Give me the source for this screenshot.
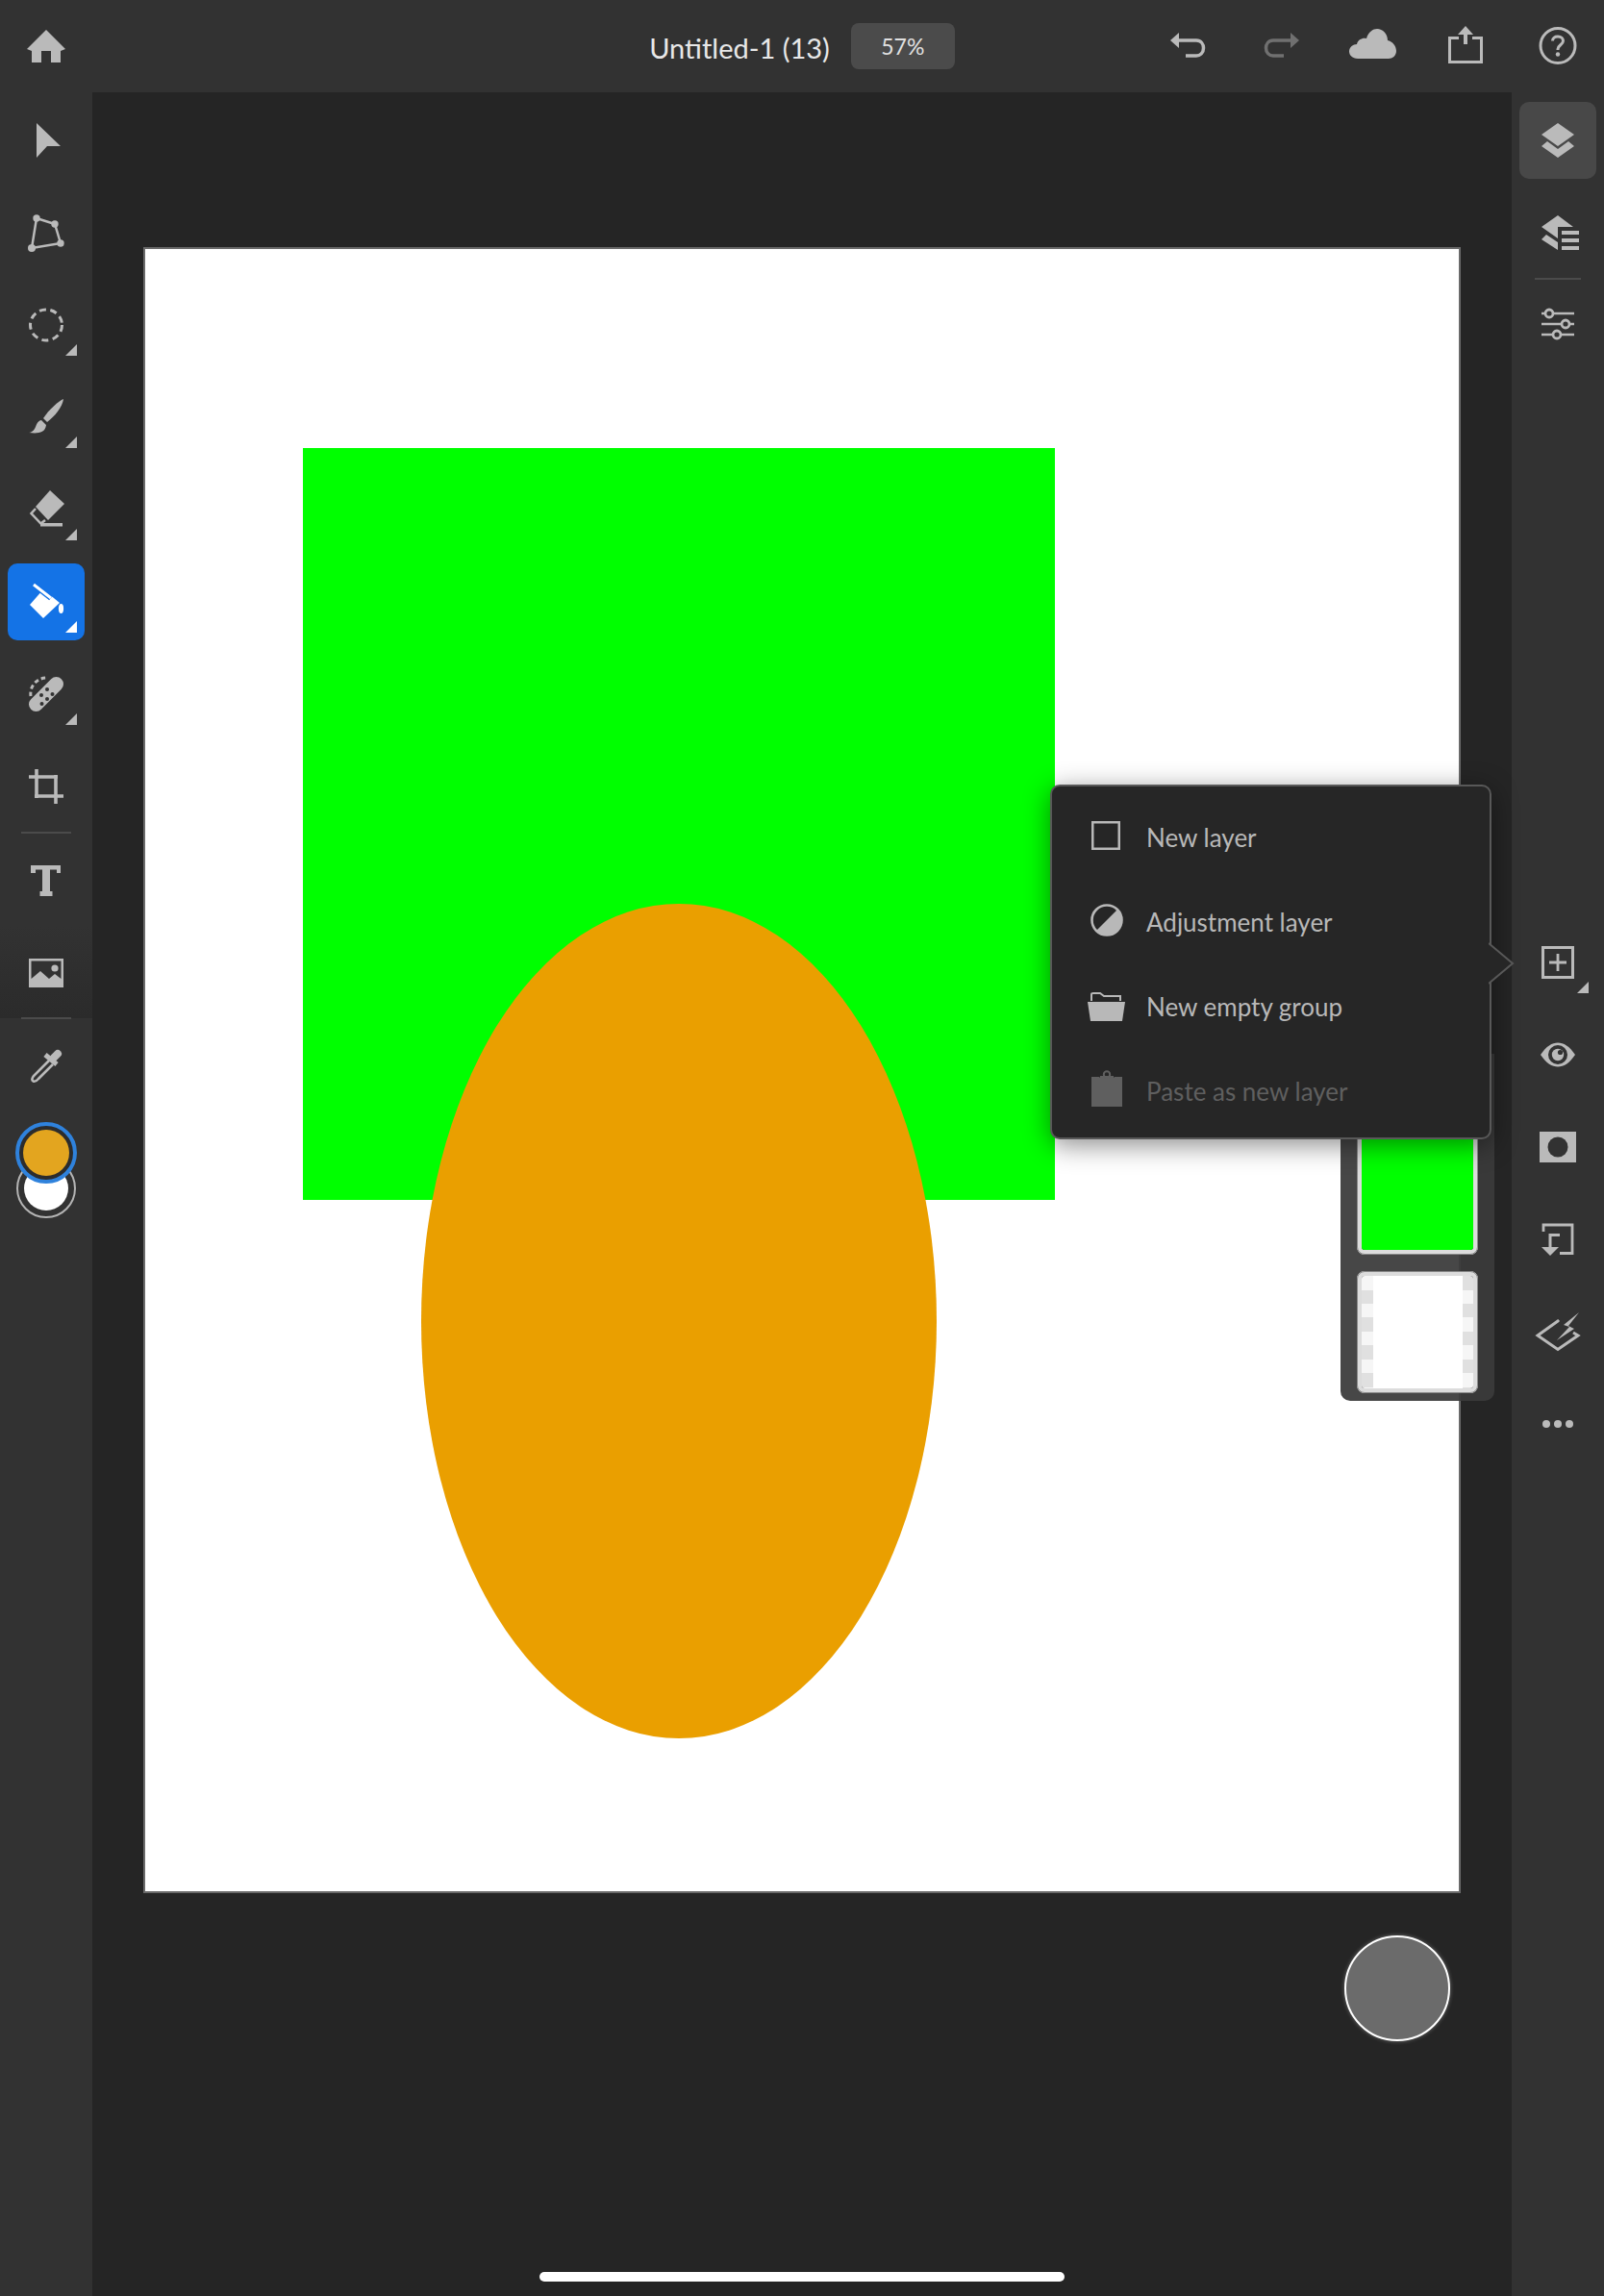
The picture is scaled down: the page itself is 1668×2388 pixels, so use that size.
<div class="app">
  <header class="topbar">
    <div class="side">
      <div class="tool">
        <svg class="ic" viewBox="0 0 48 48"><path fill="currentColor" d="M24 7 44 27 39 29V41H29V29H19V41H9V29L4 27Z"/></svg>
      </div>
    </div>
    <div class="doc">
      <span class="title">Untitled-1 (13)</span>
      <span class="zoom">57%</span>
    </div>
    <div class="side right">
      <div class="tool">
        <svg class="ic" viewBox="0 0 48 48"><path fill="currentColor" d="M5 18 14 10V26Z"/><path fill="none" stroke="currentColor" stroke-width="3.5" d="M14 18H32C37 18 39.5 22 39.5 26 39.5 31 36 34 32 34H21"/></svg>
      </div>
      <div class="tool dim">
        <svg class="ic" viewBox="0 0 48 48"><path fill="currentColor" d="M43 18 34 10V26Z"/><path fill="none" stroke="currentColor" stroke-width="3.5" d="M34 18H16C11 18 8.5 22 8.5 26 8.5 31 12 34 16 34H27"/></svg>
      </div>
      <div class="tool">
        <svg class="ic wide" viewBox="0 0 56 48"><path fill="currentColor" d="M12 37C6 37 3 33 3 29.5 3 25 7 22 11 22 12 17 17 15 21 16 23 9 28 6 32 6 38 6 43 11 43 18 48 19 52 24 52 29 52 34 48 37 44 37Z"/></svg>
      </div>
      <div class="tool">
        <svg class="ic" viewBox="0 0 48 48"><path fill="none" stroke="currentColor" stroke-width="3" d="M17 15.5H7.5V40.5H40.5V15.5H31"/><path fill="currentColor" d="M24 3 32 12H26V22H22V12H16Z"/></svg>
      </div>
      <div class="tool">
        <svg class="ic" viewBox="0 0 48 48"><circle cx="24" cy="23.5" r="18" fill="none" stroke="currentColor" stroke-width="3"/><path fill="none" stroke="currentColor" stroke-width="3" d="M18.5 18.5C18.5 15.5 21 14 24 14 27.5 14 29.5 16 29.5 18.5 29.5 22.5 24 23 24 27V28"/><circle cx="24" cy="32.5" r="2.2" fill="currentColor"/></svg>
      </div>
    </div>
  </header>

  <div class="body">
    <nav class="rail left">
      <div class="tools">
        <div class="tool">
          <svg class="ic" viewBox="0 0 48 48"><path fill="currentColor" d="M14 6 39 30H25L14 42Z"/></svg>
        </div>
        <div class="tool">
          <svg class="ic" viewBox="0 0 48 48"><path fill="none" stroke="currentColor" stroke-width="2.5" d="M14 9 33 15 39 35 9 40Z"/><g fill="currentColor"><circle cx="14" cy="9" r="3.7"/><circle cx="33" cy="15" r="3.7"/><circle cx="39" cy="35" r="3.7"/><circle cx="9" cy="40" r="4"/></g></svg>
        </div>
        <div class="tool">
          <svg class="ic" viewBox="0 0 48 48"><ellipse cx="24" cy="24" rx="16.5" ry="16" fill="none" stroke="currentColor" stroke-width="3" stroke-dasharray="7 4.5"/></svg>
          <i class="corner"></i>
        </div>
        <div class="tool">
          <svg class="ic" viewBox="0 0 48 48"><path fill="currentColor" d="M42 5C37 7 27 16 21 25L25 29C33 23 41 13 42 5Z"/><path fill="currentColor" d="M19 27C14 28 14 33 12 36 11 38 8 40 6 40 14 41 23 41 24 32Z"/></svg>
          <i class="corner"></i>
        </div>
        <div class="tool">
          <svg class="ic" viewBox="0 0 48 48"><path fill="currentColor" d="M28 4 43 18 26 35 13 21Z"/><path fill="none" stroke="currentColor" stroke-width="2.5" d="M13 23 8.5 28 18.5 38.5 23 35"/><path fill="currentColor" d="M18 38H41V41.5H18Z"/></svg>
          <i class="corner"></i>
        </div>
        <div class="tool active">
          <div class="chip">
            <svg class="ic" viewBox="0 0 48 48"><path fill="currentColor" d="M7 27 21 11 38 25 21 41Z"/><path fill="none" stroke="#1473e6" stroke-width="6" d="M11 6 29 20"/><path fill="none" stroke="currentColor" stroke-width="3" d="M11 6 29 20"/><ellipse cx="39.5" cy="31" rx="2.6" ry="5" fill="currentColor"/></svg>
            <i class="corner"></i>
          </div>
        </div>
        <div class="tool">
          <svg class="ic" viewBox="0 0 48 48"><path fill="none" stroke="currentColor" stroke-width="3" stroke-dasharray="4.5 3" d="M8 26A16.5 16.5 0 0 1 24 7"/><path fill="none" stroke="currentColor" stroke-width="15" stroke-linecap="round" d="M13.5 34.5 34.5 13.5"/><g fill="#323232"><circle cx="25" cy="19" r="2"/><circle cx="30.5" cy="24" r="2"/><circle cx="19" cy="25" r="2"/><circle cx="25" cy="29" r="2"/><circle cx="19.5" cy="34" r="2"/></g></svg>
          <i class="corner"></i>
        </div>
        <div class="tool">
          <svg class="ic" viewBox="0 0 48 48"><path fill="none" stroke="currentColor" stroke-width="3.6" d="M6 14H36M34 12V42M14 6V36M12 34H42"/></svg>
        </div>
        <div class="sep"></div>
        <div class="tool">
          <svg class="ic" viewBox="0 0 48 48"><path fill="currentColor" d="M8 9H39V17H35V13.5H28V36H30.5V41H17.5V36H20V13.5H13V17H8Z"/></svg>
        </div>
        <div class="tool">
          <svg class="ic" viewBox="0 0 48 48"><path fill="currentColor" d="M6 10H42V40H6Z"/><path fill="#323232" d="M8.5 12.5H39.5V31L33 26 27 31 18 23 8.5 31Z"/><circle cx="33" cy="20" r="3.6" fill="currentColor"/></svg>
        </div>
      </div>
      <div class="sep"></div>
      <div class="tool">
        <svg class="ic" viewBox="0 0 48 48"><path fill="none" stroke="currentColor" stroke-width="2.6" d="M27 19 11 35Q8 39 10.5 40.5 13 41.5 16 38L31 23"/><path fill="none" stroke="currentColor" stroke-width="5" d="M23 13 35 23"/><path fill="none" stroke="currentColor" stroke-width="8" stroke-linecap="round" d="M36 12 32 16"/></svg>
      </div>
      <div class="swatches">
        <div class="fg"><span></span></div>
        <div class="bg"><span></span></div>
      </div>
    </nav>

    <main class="canvas">
      <div class="art">
        <div class="rect"></div>
        <div class="oval"></div>
      </div>

      <aside class="layers">
        <div class="thumb green"><span></span></div>
        <div class="thumb blank">
          <b class="strip"></b>
          <span></span>
          <b class="strip alt"></b>
        </div>
      </aside>

      <div class="menu">
        <div class="row">
          <svg class="ic" viewBox="0 0 48 48"><rect x="9.25" y="8.25" width="27.5" height="27.5" fill="none" stroke="currentColor" stroke-width="2.5"/></svg>
          <span>New layer</span>
        </div>
        <div class="row">
          <svg class="ic" viewBox="0 0 48 48"><circle cx="24" cy="22" r="15.5" fill="none" stroke="currentColor" stroke-width="2.6"/><path fill="currentColor" d="M35 11A15.5 15.5 0 0 1 13 33Z"/></svg>
          <span>Adjustment layer</span>
        </div>
        <div class="row">
          <svg class="ic" viewBox="0 0 48 48"><path fill="none" stroke="currentColor" stroke-width="2" d="M8 18V11Q8 10 10 10H17L21 13H38V18"/><path fill="currentColor" d="M4 19H43L40 39H7Z"/></svg>
          <span>New empty group</span>
        </div>
        <div class="row off">
          <svg class="ic" viewBox="0 0 48 48"><path fill="currentColor" d="M8 9H40V40H8Z"/><path fill="#262626" d="M16 5H32V9.5H16Z"/><path fill="currentColor" d="M17 8H31V13H17Z"/><circle cx="24" cy="6.5" r="3.2" fill="none" stroke="currentColor" stroke-width="2"/></svg>
          <span>Paste as new layer</span>
        </div>
        <svg class="beak" viewBox="0 0 28 46"><path fill="#262626" stroke="#585858" stroke-width="2" d="M0 2 25 23 0 44"/></svg>
      </div>

      <div class="fab"></div>
      <div class="home"></div>
    </main>

    <nav class="rail right">
      <div class="tool">
        <div class="chip gray">
          <svg class="ic" viewBox="0 0 48 48"><path fill="currentColor" d="M24 6 41 18 24 30 7 18Z"/><path fill="currentColor" d="M7 30 13 25 24 33 35 25 41 30 24 42Z"/></svg>
        </div>
      </div>
      <div class="tool">
        <svg class="ic" viewBox="0 0 48 48"><path fill="currentColor" d="M24 6 40 18H24V30L7 18Z"/><path fill="currentColor" d="M7 31 12 26 24 34V42Z"/><path fill="currentColor" d="M28 22H46V26H28ZM28 30H46V34H28ZM28 38H46V42H28Z"/></svg>
      </div>
      <div class="sep"></div>
      <div class="tool">
        <svg class="ic" viewBox="0 0 48 48"><path fill="none" stroke="currentColor" stroke-width="2.6" d="M7 12H41M7 23H41M7 34H41"/><g fill="#323232" stroke="currentColor" stroke-width="2.8"><circle cx="15" cy="12" r="4"/><circle cx="32" cy="23" r="4"/><circle cx="23" cy="34" r="4"/></g></svg>
      </div>

      <div class="lower">
        <div class="tool">
          <svg class="ic" viewBox="0 0 48 48"><rect x="8.5" y="8.5" width="31" height="31" fill="none" stroke="currentColor" stroke-width="3"/><path fill="none" stroke="currentColor" stroke-width="2.8" d="M15 24H33M24 15V33"/></svg>
          <i class="corner"></i>
        </div>
        <div class="tool">
          <svg class="ic" viewBox="0 0 48 48"><path fill="currentColor" d="M6 24C12 15 18 11.5 24 11.5 30 11.5 36 15 42 24 36 33 30 36.5 24 36.5 18 36.5 12 33 6 24Z"/><circle cx="24" cy="24" r="10" fill="#323232"/><circle cx="24" cy="24" r="6.2" fill="currentColor"/><circle cx="26.5" cy="21.5" r="2.6" fill="#323232"/></svg>
        </div>
        <div class="tool">
          <svg class="ic" viewBox="0 0 48 48"><path fill="currentColor" d="M5 8H43V40H5Z"/><circle cx="24" cy="24" r="10.5" fill="#323232"/></svg>
        </div>
        <div class="tool">
          <svg class="ic" viewBox="0 0 48 48"><path fill="none" stroke="currentColor" stroke-width="2.8" d="M9 16V9H39V38.5H26"/><path fill="none" stroke="currentColor" stroke-width="3" d="M26 19.5H16V33"/><path fill="currentColor" d="M7 32H25L16 41Z"/></svg>
        </div>
        <div class="tool">
          <svg class="ic" viewBox="0 0 48 48"><path fill="none" stroke="currentColor" stroke-width="3" d="M25 14 24 13 3 28 24 42.5 45 28 40 25"/><path fill="currentColor" d="M46 4 30 17 36 19 23 33 41 21 35 18Z"/></svg>
        </div>
        <div class="tool">
          <svg class="ic" viewBox="0 0 48 48"><g fill="currentColor"><circle cx="12" cy="24" r="4"/><circle cx="24" cy="24" r="4"/><circle cx="36" cy="24" r="4"/></g></svg>
        </div>
      </div>
    </nav>
  </div>
</div>

<style>
:global(body){margin:0;background:#252525}
.app{width:1668px;height:2388px;display:flex;flex-direction:column;overflow:hidden;font-family:Lato,"Open Sans",sans-serif;color:#bababa}
.topbar{height:96px;flex:none;background:#323232;display:grid;grid-template-columns:1fr auto 1fr;align-items:center}
.side{display:flex}
.side.right{justify-content:flex-end}
.doc{display:flex;align-items:center;gap:22px}
.title{font-size:29px;color:#e8e8e8;padding-top:2px}
.zoom{width:108px;height:48px;background:#4b4b4b;border-radius:8px;display:flex;align-items:center;justify-content:center;font-size:23px;color:#e0e0e0}
.tool{position:relative;width:96px;height:96px;flex:none;display:flex;align-items:center;justify-content:center}
.dim{color:#707070}
.ic{width:48px;height:48px;display:block;flex:none}
.ic.wide{width:56px}
.body{flex:1;display:flex;min-height:0}
.rail{width:96px;flex:none;background:#323232;display:flex;flex-direction:column;padding-top:2px}
.tools{background:linear-gradient(#323232 90%,#2b2b2b)}
.sep{height:2px;margin:-1px 22px 0;background:#4b4b4b;position:relative}
.rail.right .sep{margin:-1px 24px}
.lower{margin-top:567px}
.corner{position:absolute;right:16px;bottom:16px;width:12px;height:12px;background:currentColor;clip-path:polygon(100% 0,100% 100%,0 100%)}
.chip{position:relative;width:80px;height:80px;border-radius:10px;display:flex;align-items:center;justify-content:center}
.active{color:#fff}
.active .chip{background:#1473e6}
.active .corner{right:8px;bottom:8px}
.chip.gray{background:#484848}
.swatches{margin-top:11px;display:flex;flex-direction:column;align-items:center}
.fg{position:relative;z-index:1;width:64px;height:64px;box-sizing:border-box;border-radius:50%;border:4px solid #2f82dc;background:#2c2c2c;display:flex;align-items:center;justify-content:center}
.fg span{width:48px;height:48px;border-radius:50%;background:#e3a51f}
.bg{margin-top:-26px;width:62px;height:62px;box-sizing:border-box;border-radius:50%;border:2px solid #b4b4b4;display:flex;align-items:center;justify-content:center}
.bg span{width:46px;height:46px;border-radius:50%;background:#fff}
.canvas{position:relative;flex:1;background:#252525;padding:161px 0 0 53px}
.art{position:relative;width:1370px;height:1712px;box-sizing:border-box;background:#fff;border:2px solid #6a6a6a}
.rect{position:absolute;left:164px;top:207px;width:782px;height:782px;background:#0f0}
.oval{position:absolute;left:287px;top:681px;width:536px;height:868px;border-radius:50%;background:#ea9f00}
.layers{position:absolute;left:1298px;top:1000px;width:160px;height:361px;box-sizing:border-box;padding:0 17px 8px;border-radius:0 0 10px 10px;background:rgba(59,59,59,.936);display:flex;flex-direction:column;justify-content:flex-end;gap:17px}
.thumb{width:126px;height:127px;box-sizing:border-box;border:5px solid #dcdcdc;outline:1.5px solid #8a8a8a;outline-offset:-1.5px;border-radius:8px;overflow:hidden;display:flex}
.green span{flex:1;background:#0f0}
.blank span{flex:1;background:#fff}
.strip{width:12px;background:repeating-linear-gradient(#f6f6f6 0 14.5px,#e0e0e0 14.5px 29px)}
.strip.alt{width:11px;background:repeating-linear-gradient(#e0e0e0 0 14.5px,#f6f6f6 14.5px 29px)}
.menu{position:absolute;left:996px;top:720px;width:459px;height:369px;box-sizing:border-box;padding:9px 0;background:#262626;border:2px solid #585858;border-radius:10px;box-shadow:0 6px 28px rgba(0,0,0,.45)}
.row{height:88px;display:flex;align-items:center;gap:17px;padding-left:33px;font-size:26px;color:#b8b8b8}
.row.off{color:#5f5f5f}
.beak{position:absolute;right:-27px;top:161px;width:28px;height:46px}
.fab{position:absolute;left:1302px;top:1917px;width:110px;height:110px;box-sizing:border-box;border-radius:50%;background:#6b6b6b;border:2.5px solid #fff;box-shadow:0 0 4px rgba(255,255,255,.35)}
.home{position:absolute;left:465px;top:2267px;width:546px;height:10px;border-radius:5px;background:#fff}
</style>
